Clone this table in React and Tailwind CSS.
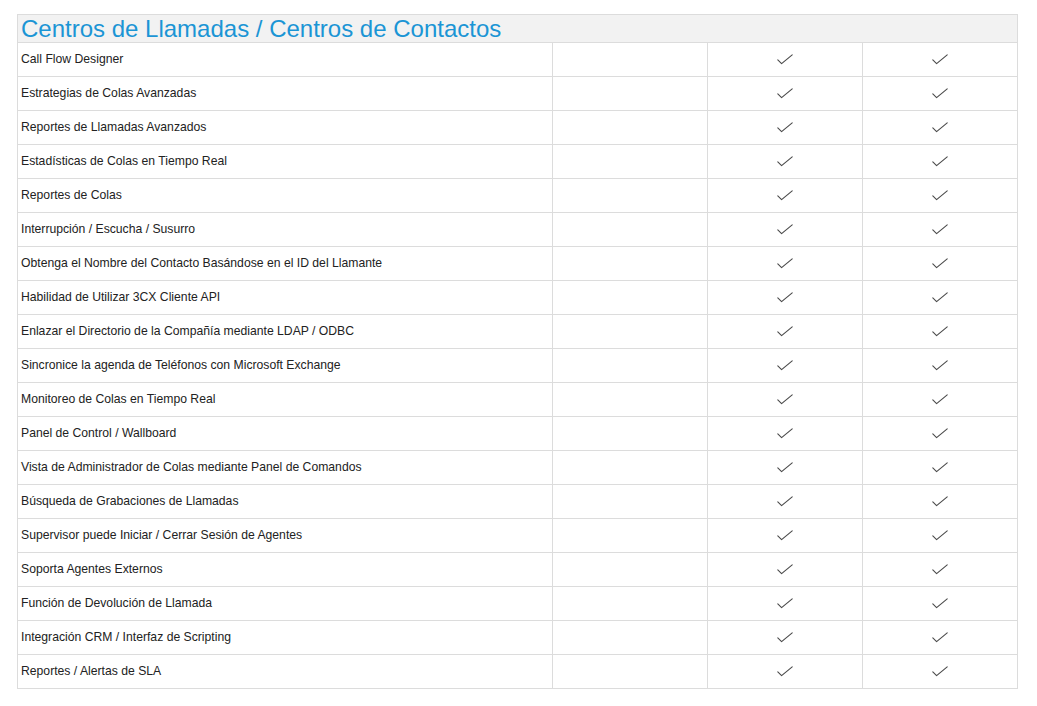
import React from "react";

const rows = [
  "Call Flow Designer",
  "Estrategias de Colas Avanzadas",
  "Reportes de Llamadas Avanzados",
  "Estadísticas de Colas en Tiempo Real",
  "Reportes de Colas",
  "Interrupción / Escucha / Susurro",
  "Obtenga el Nombre del Contacto Basándose en el ID del Llamante",
  "Habilidad de Utilizar 3CX Cliente API",
  "Enlazar el Directorio de la Compañía mediante LDAP / ODBC",
  "Sincronice la agenda de Teléfonos con Microsoft Exchange",
  "Monitoreo de Colas en Tiempo Real",
  "Panel de Control / Wallboard",
  "Vista de Administrador de Colas mediante Panel de Comandos",
  "Búsqueda de Grabaciones de Llamadas",
  "Supervisor puede Iniciar / Cerrar Sesión de Agentes",
  "Soporta Agentes Externos",
  "Función de Devolución de Llamada",
  "Integración CRM / Interfaz de Scripting",
  "Reportes / Alertas de SLA",
];

function Check() {
  return (
    <svg width="16" height="11" viewBox="0 0 16 11" fill="none">
      <path d="M0.8 5.8 L4.6 9.6 L15.2 0.8" stroke="#4a4a4a" strokeWidth="1.1" strokeLinecap="round" strokeLinejoin="round" />
    </svg>
  );
}

export default function App() {
  return (
    <div className="bg-white w-[1037px] h-[706px] pt-[14px] pl-[17px]" style={{ fontFamily: '"Liberation Sans", Arial, sans-serif' }}>
      <div className="w-[1001px] border-t border-l border-[#dcdcdc]">
        <div className="h-[28px] bg-[#f2f2f2] border-b border-r border-[#dcdcdc] pl-[3px] flex items-center">
          <span className="text-[24px] leading-[27px] text-[#1b95d5]">Centros de Llamadas / Centros de Contactos</span>
        </div>
        {rows.map((r) => (
          <div key={r} className="grid grid-cols-[535px_155px_155px_155px] h-[34px]">
            <div className="border-b border-r border-[#dcdcdc] pl-[3px] pb-[1px] flex items-center text-[12.2px] text-[#222]">{r}</div>
            <div className="border-b border-r border-[#dcdcdc]"></div>
            <div className="border-b border-r border-[#dcdcdc] flex items-center justify-center"><Check /></div>
            <div className="border-b border-r border-[#dcdcdc] flex items-center justify-center"><Check /></div>
          </div>
        ))}
      </div>
    </div>
  );
}
